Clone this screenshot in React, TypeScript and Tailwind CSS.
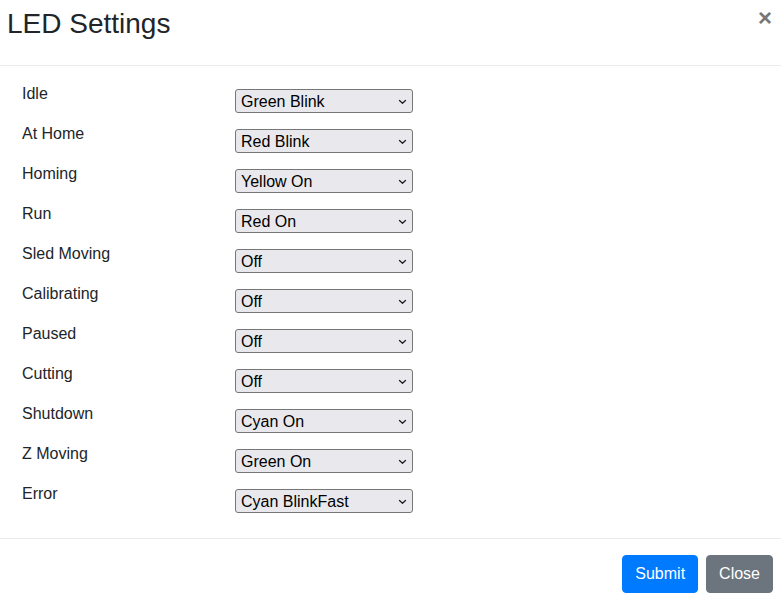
import React from 'react'

const rows: [string, string][] = [
  ['Idle', 'Green Blink'],
  ['At Home', 'Red Blink'],
  ['Homing', 'Yellow On'],
  ['Run', 'Red On'],
  ['Sled Moving', 'Off'],
  ['Calibrating', 'Off'],
  ['Paused', 'Off'],
  ['Cutting', 'Off'],
  ['Shutdown', 'Cyan On'],
  ['Z Moving', 'Green On'],
  ['Error', 'Cyan BlinkFast'],
]

const options = [
  'Off',
  'Red On',
  'Red Blink',
  'Green On',
  'Green Blink',
  'Yellow On',
  'Cyan On',
  'Cyan BlinkFast',
]

function Chevron() {
  return (
    <svg
      className="absolute right-[6px] top-[10px] pointer-events-none"
      width="9"
      height="6"
      viewBox="0 0 9 6"
      fill="none"
      stroke="#222"
      strokeWidth="1.3"
      strokeLinecap="round"
      strokeLinejoin="round"
    >
      <path d="M1.5 1.5 L4.5 4.3 L7.5 1.5" />
    </svg>
  )
}

export default function App() {
  return (
    <div className="w-[781px] h-[599px] bg-white overflow-hidden text-[#212529] font-['Liberation_Sans',Arial,sans-serif]">
      {/* Header */}
      <div className="h-[66px] border-b border-[#e9ecef] flex items-start justify-between pl-2 pr-2">
        <h4 className="text-[28px] leading-[1.2] mt-[7px] -ml-px font-normal">LED Settings</h4>
        <button className="text-[24px] font-bold leading-none text-[#777] mt-[6px] mr-[1px]">×</button>
      </div>

      {/* Body */}
      <div className="h-[473px] border-b border-[#e9ecef] pt-[16px] pl-[22px]">
        {rows.map(([label, value]) => (
          <div key={label} className="flex items-start h-[40px]">
            <label className="w-[213px] text-[16px] leading-[24px]">{label}</label>
            <div className="relative mt-[7px]">
              <select
                defaultValue={value}
                className="appearance-none w-[178px] h-[24px] text-[16px] leading-[20px] pt-px bg-[#e9e9ed] border border-[#767676] rounded-[3px] pl-[5px] text-black"
              >
                {options.map(o => (
                  <option key={o} value={o}>{o}</option>
                ))}
              </select>
              <Chevron />
            </div>
          </div>
        ))}
      </div>

      {/* Footer */}
      <div className="flex justify-end gap-2 pt-[16px] pr-2">
        <button className="bg-[#007bff] border border-[#007bff] text-white text-[16px] leading-[24px] px-3 py-1.5 rounded-[4px]">
          Submit
        </button>
        <button className="bg-[#6c757d] border border-[#6c757d] text-white text-[16px] leading-[24px] px-3 py-1.5 rounded-[4px]">
          Close
        </button>
      </div>
    </div>
  )
}
